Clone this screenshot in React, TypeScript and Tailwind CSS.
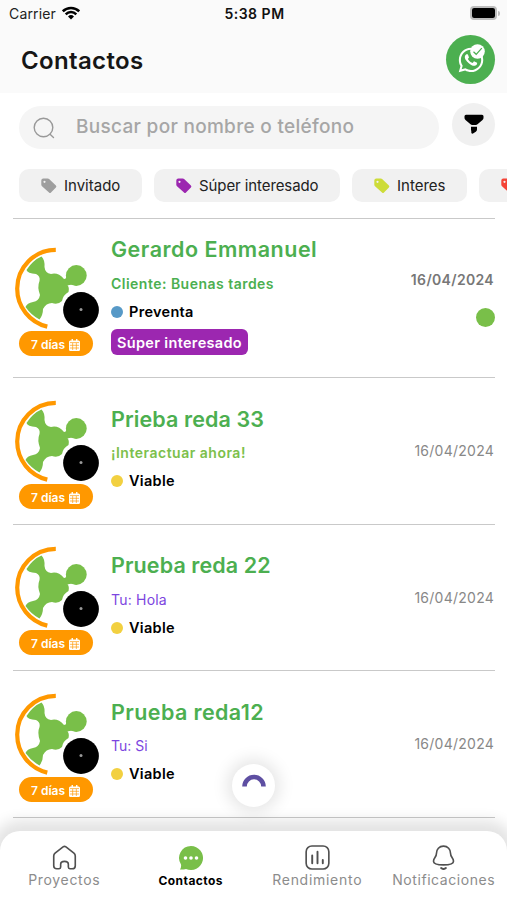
import { FaWhatsapp } from "react-icons/fa";

type Contact = {
  name: string;
  nameTracking: string;
  message: string;
  messageClass: string;
  status: string;
  dot: string;
  tag?: string;
  unread?: boolean;
};

const contacts: Contact[] = [
  {
    name: "Gerardo Emmanuel",
    nameTracking: "tracking-[0.5px]",
    message: "Cliente: Buenas tardes",
    messageClass: "font-semibold tracking-[0.48px] text-[#4caf50]",
    status: "Preventa",
    dot: "bg-[#5799c7]",
    tag: "Súper interesado",
    unread: true,
  },
  {
    name: "Prieba reda 33",
    nameTracking: "tracking-[0.1px]",
    message: "¡Interactuar ahora!",
    messageClass: "font-semibold tracking-[0.5px] text-[#7cc04b]",
    status: "Viable",
    dot: "bg-[#f2d040]",
  },
  {
    name: "Prueba reda 22",
    nameTracking: "tracking-[0.1px]",
    message: "Tu: Hola",
    messageClass: "tracking-[0.2px] text-[#7c45e0]",
    status: "Viable",
    dot: "bg-[#f2d040]",
  },
  {
    name: "Prueba reda12",
    nameTracking: "tracking-[0.4px]",
    message: "Tu: Si",
    messageClass: "text-[#7c45e0]",
    status: "Viable",
    dot: "bg-[#f2d040]",
  },
];

function StatusBar() {
  return (
    <div className="grid h-[27px] grid-cols-3 items-center pr-[7px] pl-[9px] text-[14px]">
      <div className="flex items-center gap-[6px] tracking-[0.15px] text-[#222]">
        Carrier
        <svg className="-mt-[2px] h-[14px] w-[18px]" viewBox="0 0 18 14" fill="none" stroke="#000" strokeWidth="2.5">
          <path d="M.8 5.300a11.600 11.600 0 0 1 16.400 0" />
          <path d="M3.700 8.300a7.500 7.500 0 0 1 10.600 0" />
          <path d="M9 13.500 6 10.500a4.300 4.300 0 0 1 6 0Z" fill="#000" stroke="none" />
        </svg>
      </div>
      <div className="text-center font-semibold tracking-[0.5px] text-[#111]">5:38 PM</div>
      <div className="-mt-px flex items-center justify-end">
        <div className="h-[14px] w-[27px] rounded-[4px] border-2 border-[#bdbdbd]">
          <div className="h-full w-full rounded-[2px] bg-black" />
        </div>
        <div className="ml-px h-[5px] w-[2px] rounded-r-full bg-[#bdbdbd]" />
      </div>
    </div>
  );
}

function Avatar() {
  return (
    <svg className="block h-[84px] w-[86px]" viewBox="13 247 86 84">
      <path d="M55.800 249.800A38.800 38.800 0 0 0 17.200 288.600A39 39 0 0 0 47.300 326.600" fill="none" stroke="#ff9800" strokeWidth="4.200" />
      <path
        d="M41.500 256.500Q33 260 26.500 270Q27.500 273.500 36 274Q40.500 276 39.500 281Q37 287 40 295Q39 301 33 302Q27 303 25.500 307Q31 315 39.500 319.500Q43 315 43 309Q46 303 52 303Q58 305 62 301Q63 295 68.500 292Q69.500 287 67.500 285.500Q71 284 76 285.500L66 275Q67 279 64 279Q58 272 51 274Q45 273 44.500 267Q45 260 41.500 256.500Z"
        fill="#79bf49"
      />
      <circle cx="76.300" cy="275.500" r="10.400" fill="#79bf49" />
      <circle cx="81" cy="310" r="19" fill="#fff" />
      <circle cx="81" cy="310" r="17.900" fill="#000" />
      <circle cx="81" cy="309.500" r="1.500" fill="#999" />
    </svg>
  );
}

function Calendar() {
  return (
    <svg className="h-3 w-[11px]" viewBox="0 0 12 12" preserveAspectRatio="none">
      <path d="M2.800 0h1.500v1.500h3.400V0h1.500v1.500h1.300Q12 1.500 12 3v7.500Q12 12 10.500 12h-9Q0 12 0 10.500V3Q0 1.500 1.500 1.500h1.300Z" fill="#fff" />
      <path d="M1 3.600h10M1 6.300h10M1 9h10M4 4v7M8 4v7" stroke="#ff9800" strokeWidth=".7" />
    </svg>
  );
}

function Chip({ label, color, className }: { label: string; color: string; className: string }) {
  return (
    <div className={`flex h-[33px] shrink-0 items-center gap-[7px] rounded-[10px] bg-[#f1f1f1] pl-[22px] text-[15px] text-[#222] ${className}`}>
      <svg className={`h-4 w-4 shrink-0 ${color}`} viewBox="0 0 16 16">
        <path
          fillRule="evenodd"
          fill="currentColor"
          d="M.3 2.600Q.3.600 2.300.600h4.400q1 0 1.700.7l6.500 6.200q1 1 0 2l-4.900 5q-1 1-2 0L1 8.300Q.3 7.600.3 6.800ZM3.500 2.700a1.100 1.100 0 1 0 .01 0Z"
        />
      </svg>
      <span className="pt-[2px]">{label}</span>
    </div>
  );
}

function Row({ c }: { c: Contact }) {
  return (
    <div className={`flex shrink-0 border-b border-[#c9c9c9] pr-px ${c.unread ? "h-[159px] pt-7" : "h-[146.5px] pt-[21.5px]"}`}>
      <div className="flex w-[98px] shrink-0 flex-col">
        <Avatar />
        <div className="ml-1.5 flex h-[25px] w-[74px] items-center justify-center gap-1 rounded-full bg-[#ff9800] pt-[3px] pr-px text-[12px] font-semibold text-white">
          7 días
          <Calendar />
        </div>
      </div>
      <div className={`flex grow flex-col items-start ${c.unread ? "-mt-[13px]" : "pt-1"}`}>
        <h2 className={`text-[21.5px] leading-[30px] font-semibold text-[#4caf50] ${c.nameTracking}`}>{c.name}</h2>
        <p className={`text-[14px] leading-6 ${c.unread ? "mt-2" : "mt-[7.5px]"} ${c.messageClass}`}>{c.message}</p>
        <div className="mt-1 flex h-6 items-center gap-[6px]">
          <i className={`h-3 w-3 rounded-full ${c.dot}`} />
          <span className="text-[14.5px] font-semibold tracking-[0.3px] text-black">{c.status}</span>
        </div>
        {c.tag && (
          <span className="mt-[5px] flex h-[26px] items-center rounded-md bg-[#9c27b0] px-1.5 pt-px text-[14.5px] font-semibold tracking-[0.33px] text-white">
            {c.tag}
          </span>
        )}
      </div>
      <div className={`flex flex-col items-end ${c.unread ? "pt-[23px]" : "pt-[41.5px]"}`}>
        <span className={`text-[14px] leading-5 ${c.unread ? "font-semibold tracking-[0.33px] text-[#777]" : "tracking-[0.25px] text-[#888]"}`}>
          16/04/2024
        </span>
        {c.unread && <i className="-mr-px mt-[18px] h-[19px] w-[19px] rounded-full bg-[#79bf49]" />}
      </div>
    </div>
  );
}

const strokeIcon = "mb-px h-[25px] w-[25px] text-[#505050]";

function BottomNav() {
  return (
    <nav className="relative z-10 grid h-[69px] shrink-0 grid-cols-4 rounded-t-[20px] bg-white pt-[14px] pl-px text-[14px] text-[#8c8c8c] shadow-[0_-3px_14px_8px_rgba(0,0,0,0.11)]">
      <div className="flex flex-col items-center">
        <svg className={strokeIcon} viewBox="0 0 26 26" fill="none" stroke="currentColor" strokeWidth="1.700" strokeLinejoin="round">
          <path d="M11.500 1.900Q13 .9 14.500 1.900L22.800 8.500Q24.200 9.700 24.200 11.500V21.500Q24.200 24.700 21 24.700H18.500Q17 24.700 17 23V20Q17 17 13 17T9 20V23Q9 24.700 7.500 24.700H5Q1.800 24.700 1.800 21.500V11.500Q1.800 9.700 3.200 8.500Z" />
        </svg>
        <span className="leading-[18px] tracking-[0.66px]">Proyectos</span>
      </div>
      <div className="flex flex-col items-center">
        <svg className="h-[26px] w-[26px]" viewBox="0 0 26 26">
          <path d="M13 1A12 12 0 1 1 8 23.900Q5 24.800 2 24.500Q3.500 22 3 19.500A12 12 0 0 1 13 1Z" fill="#79bf49" />
          <g fill="#fff">
            <circle cx="7.500" cy="13" r="1.800" />
            <circle cx="13" cy="13" r="1.800" />
            <circle cx="18.500" cy="13" r="1.800" />
          </g>
        </svg>
        <span className="text-[12px] leading-5 font-bold tracking-[0.45px] text-black">Contactos</span>
      </div>
      <div className="flex flex-col items-center">
        <svg className={strokeIcon} viewBox="0 0 26 26" fill="none" stroke="currentColor" strokeWidth="1.700">
          <rect x="1.200" y="1" width="23.600" height="24" rx="6" />
          <path d="M7.500 11V19M13 7V19M18.500 15.500V19" strokeWidth="2" strokeLinecap="round" />
        </svg>
        <span className="leading-[18px] tracking-[0.72px]">Rendimiento</span>
      </div>
      <div className="flex flex-col items-center">
        <svg className={strokeIcon} viewBox="0 0 26 26" fill="none" stroke="currentColor" strokeWidth="1.700" strokeLinecap="round">
          <path d="M13 1.200C8.500 1.200 5.700 4.500 5.700 8.500C5.700 13 2.600 13.500 2.600 16.800C2.600 19.500 7 20.600 13 20.600S23.400 19.500 23.400 16.800C23.400 13.500 20.300 13 20.300 8.500C20.300 4.500 17.500 1.200 13 1.200Z" />
          <path d="M10.500 24Q13 26 15.500 24" strokeWidth="2" />
        </svg>
        <span className="leading-[18px] tracking-[0.57px]">Notificaciones</span>
      </div>
    </nav>
  );
}

export default function App() {
  return (
    <div className="relative flex h-[900px] w-[507px] flex-col overflow-hidden bg-white font-['Inter',sans-serif]">
      <header className="h-[93px] shrink-0 bg-[#fafafa]">
        <StatusBar />
        <div className="flex items-center justify-between pt-2 pr-3 pl-[21px]">
          <h1 className="pt-[2px] text-[24px] font-semibold tracking-[0.35px] text-[#161616]">Contactos</h1>
          <div className="flex h-[49px] w-[49px] items-center justify-center rounded-full bg-[#4caf50]">
            <div className="relative h-[28px] w-[28px]">
              <FaWhatsapp className="h-[28px] w-[28px] text-white" />
              <svg className="absolute -top-[2px] left-[13px] h-[15px] w-[15px]" viewBox="0 0 15 15">
                <circle cx="7.500" cy="7.500" r="7.300" fill="#fff" />
                <path d="M3.500 7.800 6.200 10.300 11.800 4.200" fill="none" stroke="#4caf50" strokeWidth="1.200" />
              </svg>
            </div>
          </div>
        </div>
      </header>

      <div className="flex shrink-0 items-start gap-[13px] pt-[10px] pl-[19px]">
        <div className="mt-[3px] flex h-[43px] w-[420px] items-center gap-[21px] rounded-full bg-[#f5f5f5] pl-[14px]">
          <svg className="h-[22px] w-[22px] text-[#999]" viewBox="0 0 22 22" fill="none" stroke="currentColor" strokeWidth="1.400" strokeLinecap="round">
            <circle cx="10.500" cy="10.500" r="9.300" />
            <path d="m17.300 17.500 3.200 3" />
          </svg>
          <span className="pb-px text-[19px] font-medium tracking-[0.3px] text-[#a6a6a6]">Buscar por nombre o teléfono</span>
        </div>
        <div className="flex h-[43px] w-[43px] items-center justify-center rounded-full bg-[#f0f0f0] pb-px">
          <svg className="h-[20px] w-[20px]" viewBox="0 0 20 20">
            <path d="M2 .8H18Q19.500.8 19.500 2.300V4Q19.500 5 18.500 6L13.500 10.300Q12.800 11 11.800 11H8.200Q7.200 11 6.500 10.300L1.500 6Q.5 5 .5 4V2.300Q.5.8 2 .8Z" />
            <path d="M7 12.800H13V15.500Q13 17 11.800 17.800L9 19.500Q7.300 20 7.300 18.500V16.500H7Z" />
          </svg>
        </div>
      </div>

      <div className="flex shrink-0 gap-3 overflow-hidden pt-5 pb-4 pl-[19px]">
        <Chip label="Invitado" color="text-[#9e9e9e]" className="w-[123px]" />
        <Chip label="Súper interesado" color="text-[#9c27b0]" className="w-[186px] tracking-[-0.09px]" />
        <Chip label="Interes" color="text-[#cddc39]" className="w-[115px]" />
        <Chip label="" color="text-[#f44336]" className="w-[115px]" />
      </div>

      <main className="mr-3 ml-[13px] min-h-0 flex-1 overflow-hidden border-t border-[#c9c9c9]">
        {contacts.map((c) => (
          <Row key={c.name} c={c} />
        ))}
      </main>

      <BottomNav />

      <div className="absolute top-[764px] left-[232px] flex h-[43px] w-[43px] items-center justify-center rounded-full bg-white shadow-[0_0_16px_5px_rgba(0,0,0,0.10)]">
        <svg className="-mt-3 h-[14px] w-[24px]" viewBox="0 0 24 14">
          <path d="M2.500 13.500A9.500 9.500 0 0 1 21.500 13.500" fill="none" stroke="#5e4fa2" strokeWidth="4.600" />
        </svg>
      </div>
    </div>
  );
}
